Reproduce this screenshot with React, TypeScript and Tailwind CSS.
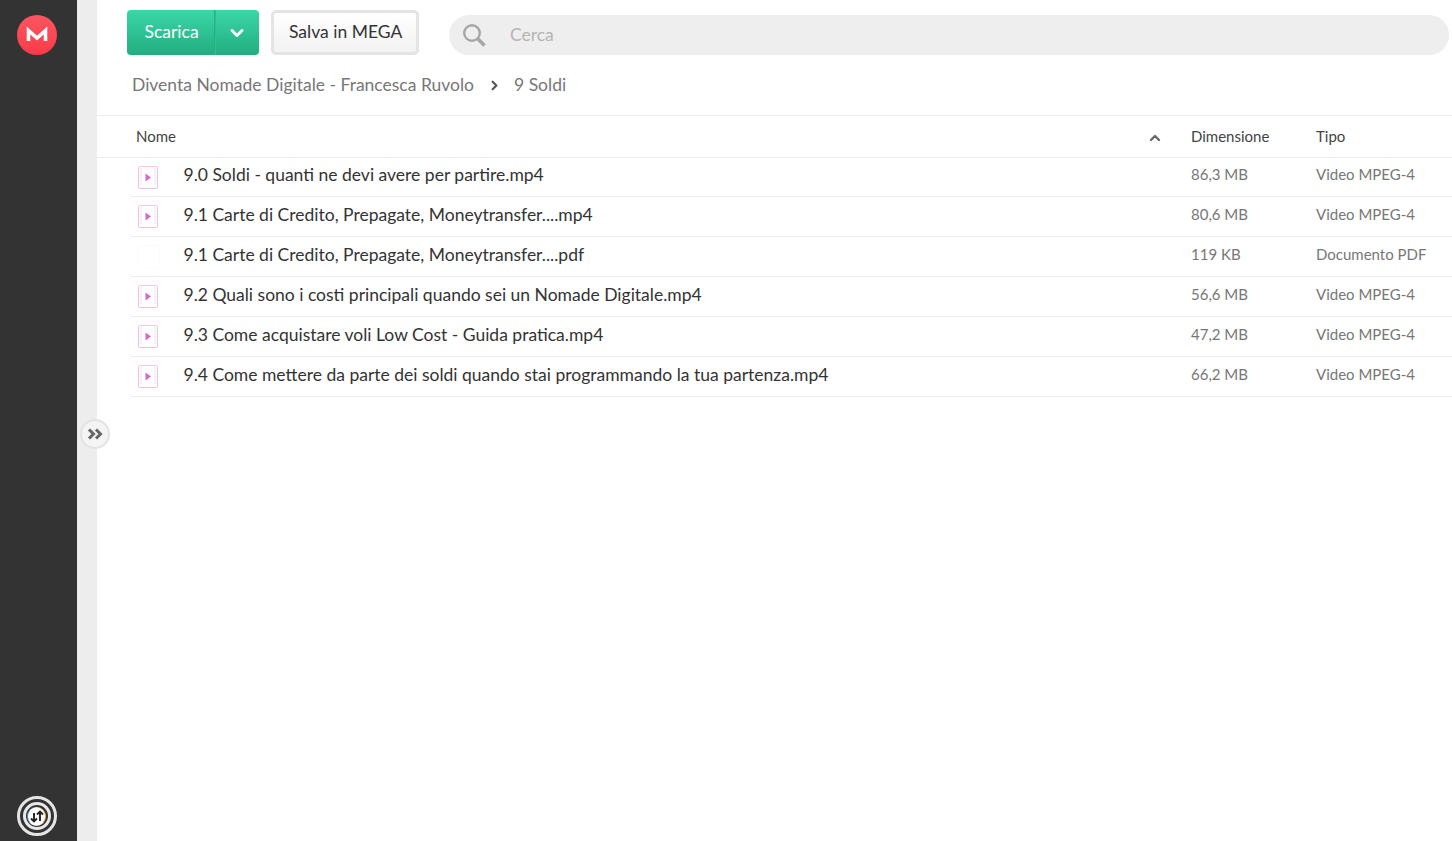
import { ChevronDown, ChevronRight, ChevronUp } from 'lucide-react'

interface FileRow {
  name: string
  size: string
  type: string
  video: boolean
}

const files: FileRow[] = [
  { name: '9.0 Soldi - quanti ne devi avere per partire.mp4', size: '86,3 MB', type: 'Video MPEG-4', video: true },
  { name: '9.1 Carte di Credito, Prepagate, Moneytransfer....mp4', size: '80,6 MB', type: 'Video MPEG-4', video: true },
  { name: '9.1 Carte di Credito, Prepagate, Moneytransfer....pdf', size: '119 KB', type: 'Documento PDF', video: false },
  { name: '9.2 Quali sono i costi principali quando sei un Nomade Digitale.mp4', size: '56,6 MB', type: 'Video MPEG-4', video: true },
  { name: '9.3 Come acquistare voli Low Cost - Guida pratica.mp4', size: '47,2 MB', type: 'Video MPEG-4', video: true },
  { name: '9.4 Come mettere da parte dei soldi quando stai programmando la tua partenza.mp4', size: '66,2 MB', type: 'Video MPEG-4', video: true }
]

const VideoIcon = (): React.JSX.Element => (
  <svg width="20" height="23" viewBox="0 0 20 23" fill="none">
    <defs>
      <linearGradient id="video-edge" x1="0" y1="0" x2="0" y2="1">
        <stop offset="0" stopColor="#fbc4da" />
        <stop offset="1" stopColor="#dfc4f5" />
      </linearGradient>
    </defs>
    <rect x="0.5" y="0.5" width="19" height="22" rx="1.5" fill="#fdfcfe" stroke="url(#video-edge)" />
    <path d="M2 3h2M2 6h2M2 9h2M2 12h2M2 15h2M2 18h2M16 3h2M16 6h2M16 9h2M16 12h2M16 15h2M16 18h2" stroke="#f3e4f5" strokeWidth="1.6" />
    <path d="M7.500 7.500v8l5.500-4z" fill="#cf6cc9" />
  </svg>
)

// il pdf nel riferimento ha solo un contorno quasi invisibile
const GhostIcon = (): React.JSX.Element => (
  <svg width="22" height="23" viewBox="0 0 22 23" fill="none">
    <rect x="0.5" y="0.5" width="21" height="22" rx="2" stroke="#fbfbfb" />
  </svg>
)

const MegaLogo = (): React.JSX.Element => (
  <div className="w-10 h-10 rounded-full bg-gradient-to-b from-[#fb5560] to-[#f93a48] flex items-center justify-center">
    <svg width="22" height="16" viewBox="0 0 22 16" fill="none">
      <path d="M2.500 14V3.500L11 11l8.500-7.500V14" stroke="white" strokeWidth="3.600" />
    </svg>
  </div>
)

const TransferIcon = (): React.JSX.Element => (
  <div className="w-10 h-10 rounded-full border-[3px] border-[#e4e4e4] flex items-center justify-center">
    <div className="w-[28px] h-[28px] rounded-full border-[3px] border-[#e8e8e8] flex items-center justify-center">
      <div className="w-[19px] h-[19px] rounded-full bg-white border-r border-r-[#f0a040] border-l border-l-[#4a90d8] flex items-center justify-center">
        <svg width="14" height="13" viewBox="0 0 14 13" fill="none" stroke="#222" strokeWidth="1.900">
          <path d="M4 3v8.500M1 8.500 4 11.500 7 8.500" />
          <path d="M10 11V1.500M7 4.500 10 1.500 13 4.500" />
        </svg>
      </div>
    </div>
  </div>
)

const SearchIcon = (): React.JSX.Element => (
  <svg width="25" height="25" viewBox="0 0 25 25" fill="none" stroke="#a6a6a6">
    <circle cx="10" cy="10" r="7.800" strokeWidth="2.400" />
    <path d="M15.500 15.500 22.500 22.500" strokeWidth="3.600" />
  </svg>
)

const ToggleArrows = (): React.JSX.Element => (
  <svg width="16" height="12" viewBox="0 0 16 12" fill="none" stroke="#666" strokeWidth="3">
    <path d="M2 1.500 6.500 6 2 10.500" />
    <path d="M9 1.500 13.500 6 9 10.500" />
  </svg>
)

export default function App(): React.JSX.Element {
  return (
    <div className="relative flex h-[841px] w-[1452px] overflow-hidden bg-white font-['Lato',sans-serif]">
      <aside className="w-[77px] shrink-0 bg-[#333333] flex flex-col items-center justify-between pt-[15px] pb-[5px] pr-[4px]">
        <MegaLogo />
        <TransferIcon />
      </aside>
      <div className="w-[20px] shrink-0 bg-[#ededed]" />

      {/* toggle a cavallo della colonna grigia */}
      <button className="absolute left-[80px] top-[419px] w-[30px] h-[30px] rounded-full bg-[#f4f4f4] border-2 border-[#e2e2e2] flex items-center justify-center">
        <ToggleArrows />
      </button>

      <main className="flex-1 min-w-0">
        <div className="h-[116px] border-b border-[#eeeeee] pl-[30px] pt-[10px]">
          <div className="flex items-start">
            <div className="flex h-[45px] w-[132px] rounded-[4px] overflow-hidden bg-gradient-to-b from-[#3cd6a8] to-[#20ae80] text-white">
              <span className="w-[88px] border-r border-[#26ad82] pl-[17.5px] text-[17.5px] leading-[43px]">Scarica</span>
              <span className="flex-1 border-l border-[#30c093] flex items-center justify-center pr-[2px]">
                <ChevronDown size={20} strokeWidth={3.500} />
              </span>
            </div>
            <div className="ml-[12px] h-[45px] w-[148px] rounded-[5px] border-[3px] border-[#e4e4e4] bg-gradient-to-b from-white to-[#f2f2f2] pl-[15px] text-[17.5px] leading-[37px] text-[#333]">
              Salva in MEGA
            </div>
            <div className="ml-[30px] mt-[5px] h-[40px] w-[1000px] rounded-full bg-[#eeeeee] flex items-center pl-[13px] text-[17.5px] text-[#b5b5b5]">
              <SearchIcon />
              <span className="ml-[23px]">Cerca</span>
            </div>
          </div>
          <div className="flex items-center ml-[5px] mt-[17px] text-[17.5px] leading-[26px] text-[#777]">
            <span>Diventa Nomade Digitale - Francesca Ruvolo</span>
            <ChevronRight size={15} strokeWidth={3.500} className="ml-[13px] text-[#555]" />
            <span className="ml-[12px]">9 Soldi</span>
          </div>
        </div>

        <div className="h-[42px] border-b border-[#eeeeee] flex items-center text-[15px] text-[#444]">
          <span className="ml-[39px] flex-1">Nome</span>
          <ChevronUp size={16} strokeWidth={3.500} className="text-[#666] mt-[3px]" />
          <span className="ml-[28px] w-[125px]">Dimensione</span>
          <span className="w-[136px]">Tipo</span>
        </div>

        <div className="ml-[33px]">
          {files.map((file) => (
            <div key={file.name} className="h-[40px] first:h-[39px] border-b border-[#eeeeee] flex items-center">
              <span className="w-[53.5px] pl-[8px] shrink-0 h-[23px] flex">
                {file.video ? <VideoIcon /> : <GhostIcon />}
              </span>
              <span className="flex-1 text-[17.5px] text-[#333] -mt-[3px]">{file.name}</span>
              <span className="w-[125px] text-[15px] text-[#777] -mt-[5px]">{file.size}</span>
              <span className="w-[136px] text-[15px] text-[#777] -mt-[5px]">{file.type}</span>
            </div>
          ))}
        </div>
      </main>
    </div>
  )
}
